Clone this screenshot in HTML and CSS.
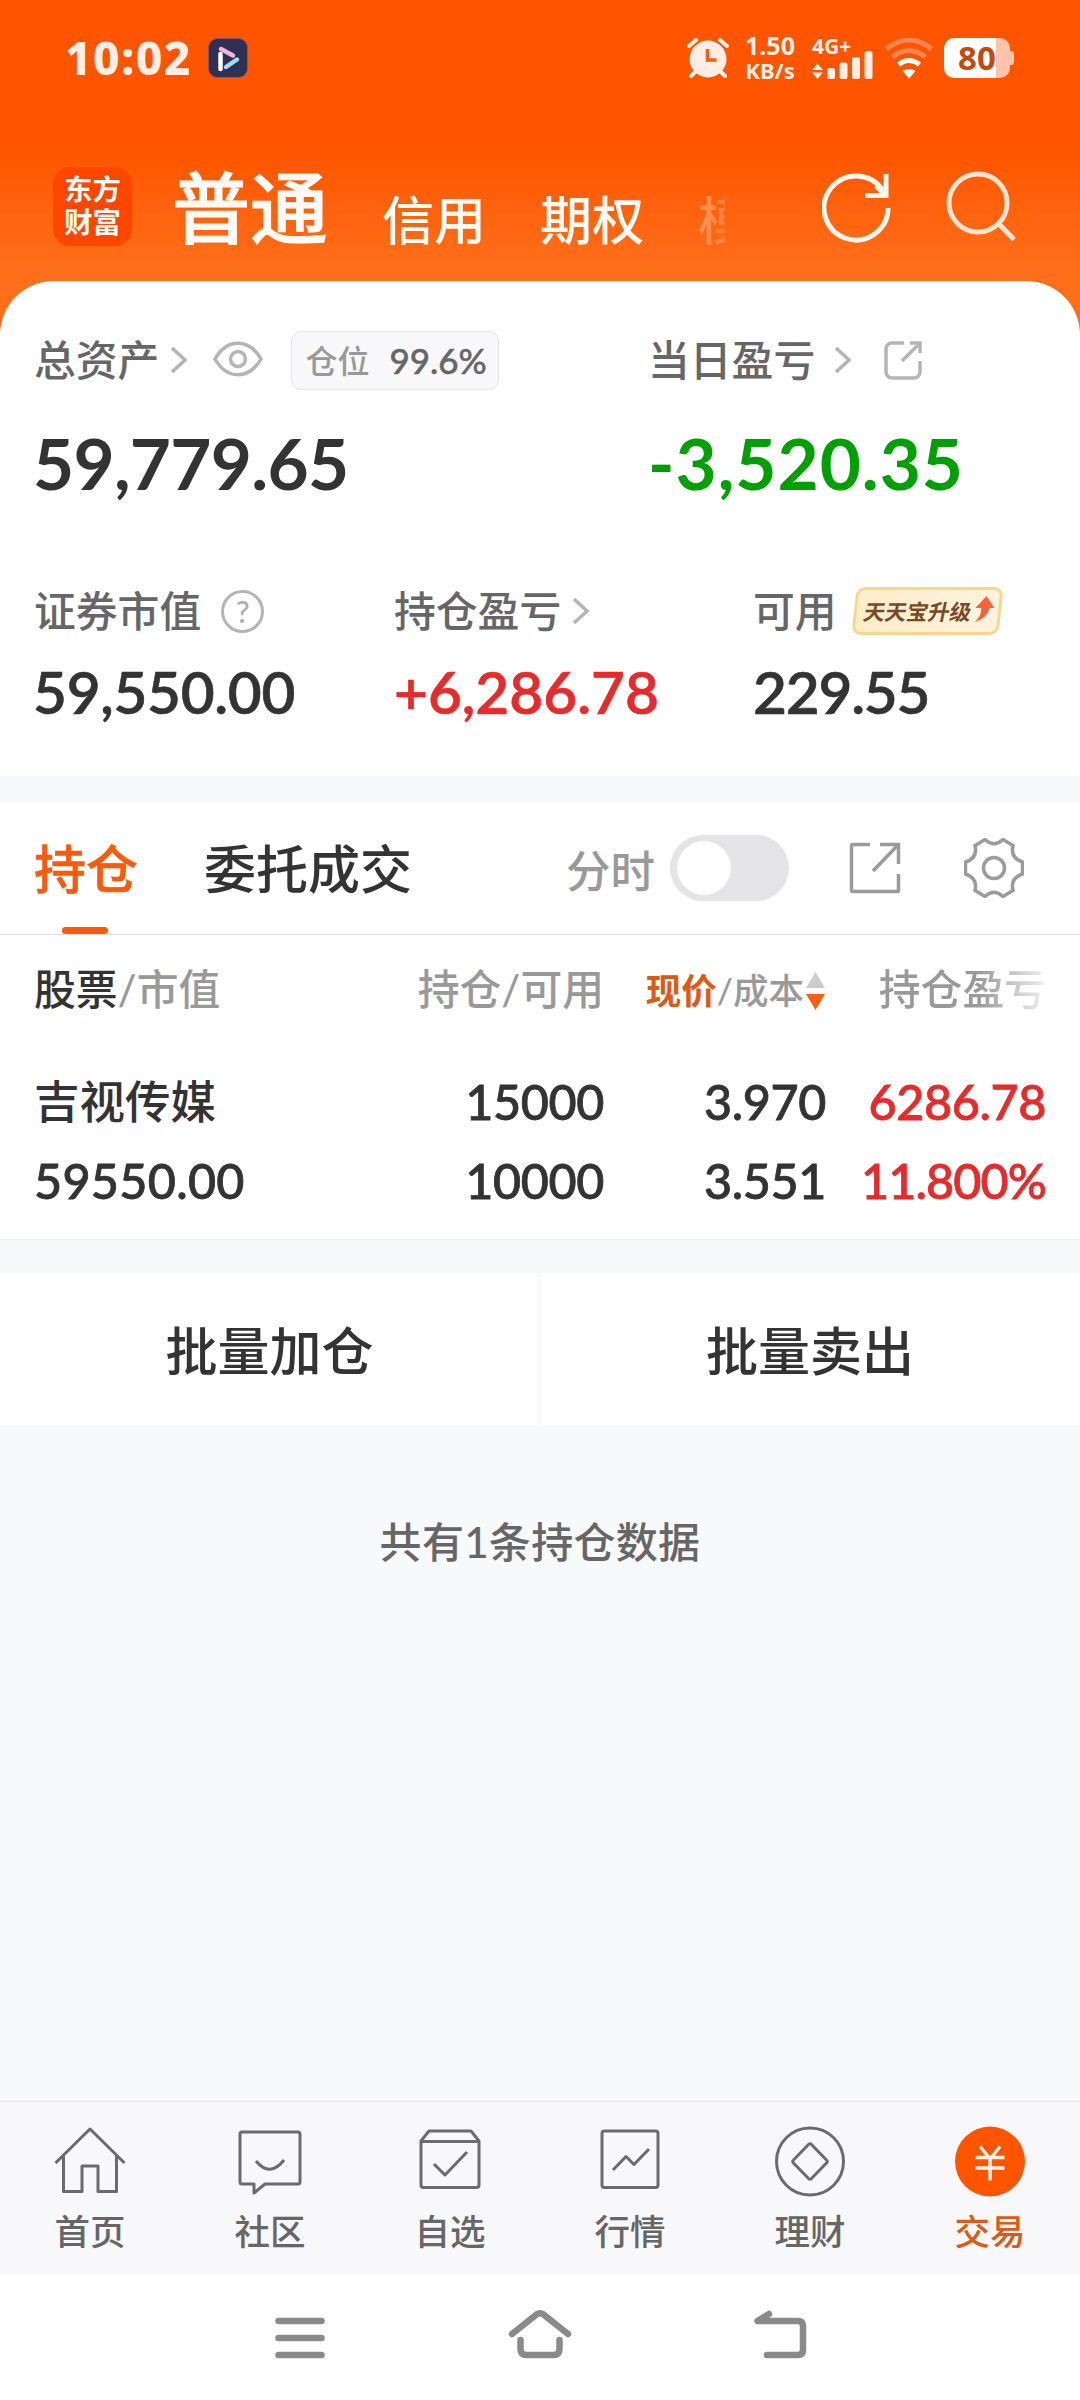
FILE: index.html
```html
<!DOCTYPE html>
<html lang="zh-CN">

<head>
    <title>交易</title>
    <meta charset="utf-8">
    <meta name="viewport" content="width=device-width, initial-scale=1.0">
    <link rel="stylesheet" href="styles.css">
</head>

<body>
    <header>
        <div class="status">
            <span class="clock">10:02</span>
            <svg class="app-dot" width="40" height="40" viewBox="0 0 40 40">
                <rect x=".5" y=".5" width="39" height="39" rx="9" fill="#2f3054" stroke="#8a5566" />
                <path d="M12.5 16v15" stroke="#fff" stroke-width="4.5" stroke-linecap="round" />
                <path d="M13 11l12 6.500" stroke="#f5b5da" stroke-width="4.500" stroke-linecap="round" />
                <path d="M18 29l11-7.500" stroke="#9fdcf8" stroke-width="4.500" stroke-linecap="round" />
            </svg>
            <svg class="alarm" width="42" height="42" viewBox="0 0 42 42">
                <path d="M2 9l7-6M40 9l-7-6M4 39l6-6M38 39l-6-6" stroke="#ffeee6" stroke-width="4" stroke-linecap="round" />
                <circle cx="21" cy="22" r="18.500" fill="#ffeee6" />
                <path d="M20.500 12v11h9" fill="none" stroke="#f75a12" stroke-width="3.500" />
            </svg>
            <div class="speed"><span>1.50</span><span>KB/s</span></div>
            <div class="mobile">
                <span>4G+</span>
                <svg class="bars" width="61" height="28" viewBox="0 0 61 28">
                    <path d="M0 19l5.500-6.500 5.500 6.500zM0 21.500h11L5.500 28z" />
                    <rect x="15" y="17" width="8" height="11" rx="2.500" />
                    <rect x="27.500" y="11.500" width="8" height="16.500" rx="2.500" />
                    <rect x="40" y="6" width="8" height="22" rx="2.500" />
                    <rect x="52.500" y="0" width="8" height="28" rx="2.500" />
                </svg>
            </div>
            <svg class="wifi" width="48" height="41" viewBox="0 0 48 41" stroke-width="5">
                <path d="M1.500 11Q24-7 46.500 11" stroke="#ff8650" />
                <path d="M7.500 19Q24 6 40.500 19" stroke="#ff8650" />
                <path d="M13.500 26.500Q24 18.500 34.500 26.500" stroke="#fff" />
                <path d="M17.500 33q6.500-4 13 0L24 40.500z" fill="#fff" stroke="none" />
            </svg>
            <div class="battery"><span>80</span></div>
        </div>

        <div class="top">
            <div class="logo">东方<br>财富</div>
            <div class="accounts">
                <span class="valgt">普通</span>
                <span>信用</span>
                <span>期权</span>
                <span class="fade">模</span>
            </div>
            <svg class="refresh" width="70" height="72" viewBox="0 0 70 72" stroke="#fff6ee" stroke-width="5">
                <path d="M66 37a32 32 0 1 1-5.500-18" />
                <path d="M64 3v21.500H43" />
                <path d="M54 15l9 9" />
            </svg>
            <svg class="search" width="70" height="72" viewBox="0 0 70 72" stroke="#ffe3d0" stroke-width="5">
                <circle cx="32" cy="32" r="29" />
                <path d="M53 53l15 15.500" />
            </svg>
        </div>
    </header>

    <section class="assets">
        <div class="row total">
            <article>
                <p class="label">
                    <span>总资产</span>
                    <svg class="chev" width="18" height="28" viewBox="0 0 18 28"><path d="M2 2l13 12L2 26" /></svg>
                    <svg class="eye" width="50" height="36" viewBox="0 0 50 36">
                        <path d="M2 18C14-3 36-3 48 18C36 39 14 39 2 18z" />
                        <circle cx="25" cy="18" r="7.500" />
                    </svg>
                    <span class="position">仓位 <b>99.6%</b></span>
                </p>
                <p class="big sum">59,779.65</p>
            </article>
            <article>
                <p class="label">
                    <span>当日盈亏</span>
                    <svg class="chev gap" width="18" height="28" viewBox="0 0 18 28"><path d="M2 2l13 12L2 26" /></svg>
                    <svg class="share" width="38" height="39" viewBox="0 0 38 39">
                        <path d="M20 2H8a6 6 0 0 0-6 6v23a6 6 0 0 0 6 6h22a6 6 0 0 0 6-6V20M26 2h10v10M36 2L18 20" />
                    </svg>
                </p>
                <p class="big down">-3,520.35</p>
            </article>
        </div>
        <div class="row">
            <article>
                <p class="label">
                    <span>证券市值</span>
                    <span class="help">?</span>
                </p>
                <p class="mid">59,550.00</p>
            </article>
            <article>
                <p class="label">
                    <span>持仓盈亏</span>
                    <svg class="chev near" width="18" height="28" viewBox="0 0 18 28"><path d="M2 2l13 12L2 26" /></svg>
                </p>
                <p class="mid up">+6,286.78</p>
            </article>
            <article>
                <p class="label">
                    <span>可用</span>
                    <span class="badge"><i>天天宝升级</i>
                        <svg width="20" height="26" viewBox="0 0 20 26"><path d="M11 0l9 12h-5q-1 10-13 14q6-6 5-14H1z" fill="#f9603c" /></svg>
                    </span>
                </p>
                <p class="mid cash">229.55</p>
            </article>
        </div>
    </section>

    <section class="holdings">
        <div class="tabs">
            <span class="tab valgt">持仓</span>
            <span class="tab">委托成交</span>
            <span class="minute">分时</span>
            <span class="switch"></span>
            <svg class="export" width="52" height="52" viewBox="0 0 52 52">
                <path d="M21 2.500H4a1.500 1.500 0 0 0-1.500 1.500v44a1.500 1.500 0 0 0 1.500 1.500h44a1.500 1.500 0 0 0 1.500-1.500V32M31 2.500h18.500V22M49 3L24 29" />
            </svg>
            <svg class="gear" width="60" height="60" viewBox="0 0 60 60">
                <path d="M21 1.500Q30 10 39 1.500L49 7.500Q46 20 58.500 24V36Q46 40 49 52.500L39 58.500Q30 50 21 58.500L11 52.500Q14 40 1.500 36V24Q14 20 11 7.500z" />
                <circle cx="30" cy="30" r="10.500" />
            </svg>
        </div>

        <div class="grid head">
            <p><em>股票</em>/市值</p>
            <p>持仓/可用</p>
            <p class="sorted">
                <strong>现价</strong>/成本
                <svg width="19" height="38" viewBox="0 0 19 38"><path d="M0 16L9.500 0 19 16z" fill="#ccc" /><path d="M0 22h19L9.500 38z" fill="#f9600f" /></svg>
            </p>
            <p class="fading">持仓盈亏</p>
        </div>
        <div class="grid stock">
            <p class="name">吉视传媒</p>
            <p>15000</p>
            <p>3.970</p>
            <p class="up">6286.78</p>
            <p class="value">59550.00</p>
            <p>10000</p>
            <p>3.551</p>
            <p class="up rate">11.800%</p>
        </div>
    </section>

    <section class="actions">
        <button>批量加仓</button>
        <button>批量卖出</button>
    </section>

    <p class="count">共有1条持仓数据</p>

    <nav>
        <a>
            <svg width="72" height="72" viewBox="0 0 72 72">
                <path d="M1.500 37L36 3l34.500 34M9.500 30v35.500H28V40h16v25.500h18.500V30" />
            </svg>
            首页
        </a>
        <a>
            <svg width="72" height="72" viewBox="0 0 72 72">
                <path d="M8 6h56a2 2 0 0 1 2 2v48a2 2 0 0 1-2 2H31l-11 9v-9H8a2 2 0 0 1-2-2V8a2 2 0 0 1 2-2z" />
                <path d="M22 35q14 17 28-1" />
            </svg>
            社区
        </a>
        <a>
            <svg width="72" height="72" viewBox="0 0 72 72">
                <path d="M7 15l8-10h42l8 10v44a2.500 2.500 0 0 1-2.500 2.500h-53A2.500 2.500 0 0 1 7 59zM7 15.500h58M20 38l11 11 22-23" />
            </svg>
            自选
        </a>
        <a>
            <svg width="72" height="72" viewBox="0 0 72 72">
                <rect x="8" y="5" width="56" height="56.500" rx="2.500" />
                <path d="M19 44l13-13.500 8 8L55 23" />
            </svg>
            行情
        </a>
        <a>
            <svg width="72" height="72" viewBox="0 0 72 72">
                <circle cx="36" cy="35.500" r="33.500" />
                <path d="M34.500 18.500q1.500-1.500 3 0l15 15.500q1.500 1.500 0 3l-15 15.500q-1.500 1.500-3 0l-15-15.500q-1.500-1.500 0-3z" />
            </svg>
            理财
        </a>
        <a class="valgt">
            <svg width="72" height="72" viewBox="0 0 72 72">
                <circle class="coin" cx="36" cy="35.500" r="35" />
                <path class="yen" d="M26 20.500L36 33l10-12.500M21.500 31.500h29M21.500 42h29M36 32v22.500" />
            </svg>
            交易
        </a>
    </nav>

    <footer>
        <svg width="60" height="56" viewBox="0 0 60 56"><path d="M8.500 14h43M8.500 31h43M8.500 48h43" /></svg>
        <svg width="66" height="56" viewBox="0 0 66 56"><path d="M5 27L29.500 7.500q3.500-2.500 7 0L61 27M13.500 33v9q0 6 6 6h27q6 0 6-6v-9" /></svg>
        <svg width="60" height="56" viewBox="0 0 60 56"><path d="M19 7L7.500 14H48q5 0 5 5v24q0 5-5 5H17" /></svg>
    </footer>
</body>

</html>
```
FILE: styles.css
```css
* {
    box-sizing: border-box;
}

body {
    margin: 0;
    width: 1080px;
    height: 2400px;
    display: flex;
    flex-direction: column;
    background-color: #f7f9fb;
    color: #333;
    font-family: Lato, "Noto Sans CJK SC", sans-serif;
    font-weight: 500;
    overflow: hidden;
}

p {
    margin: 0;
}

svg {
    flex: none;
    fill: none;
}

/* header */

header {
    height: 335px;
    margin-bottom: -54px;
    background: linear-gradient(#ff5500 150px, #ff6f1a 270px);
    color: #fffaf5;
}

.status {
    display: flex;
    align-items: center;
    height: 116px;
    padding-left: 65px;
    color: #ffeee6;
    font-family: "Noto Sans", sans-serif;
    font-weight: 700;
}

.clock {
    width: 143px;
    font-size: 46px;
    font-weight: 800;
    letter-spacing: 1.5px;
    line-height: 60px;
    padding-bottom: 2px;
    white-space: nowrap;
}

.alarm {
    margin-left: 439px;
}

.speed {
    width: 56px;
    margin-left: 13px;
    text-align: center;
    line-height: 25px;
    font-size: 22px;
}

.speed span {
    display: block;
}

.speed span:first-child {
    font-size: 25px;
}

.mobile {
    width: 61px;
    height: 41px;
    margin-left: 14px;
    display: flex;
    flex-direction: column;
    justify-content: space-between;
}

.mobile span {
    height: 13px;
    font-size: 21px;
    line-height: 17px;
    white-space: nowrap;
}

.bars {
    fill: #ffeee6;
}

.wifi {
    margin-left: 12px;
}

.battery {
    position: relative;
    width: 66px;
    height: 40px;
    margin-left: 11px;
    border-radius: 10px;
    background: linear-gradient(90deg, #fff 52px, #ffc4ab 52px);
    color: #c24a12;
    font-size: 33px;
    line-height: 39px;
    text-align: center;
}

.battery::after {
    content: "";
    position: absolute;
    left: 66px;
    top: 13px;
    width: 4px;
    height: 14px;
    border-radius: 0 3px 3px 0;
    background-color: #ffc4ab;
}

.top {
    display: flex;
    align-items: center;
    height: 181px;
    padding-left: 53px;
}

.logo {
    width: 79px;
    height: 79px;
    border-radius: 17px;
    background-color: #ff4600;
    font-size: 28.5px;
    font-weight: 700;
    line-height: 33px;
    padding-top: 6px;
    text-align: center;
}

.accounts {
    display: flex;
    align-items: baseline;
    width: 553px;
    height: 110px;
    margin-left: 40px;
    overflow: hidden;
    font-size: 52px;
    line-height: 112px;
    white-space: nowrap;
}

.accounts span {
    margin-right: 54px;
    position: relative;
    top: 2px;
}

.accounts .valgt {
    top: 0;
    font-size: 78px;
    font-weight: 500;
    -webkit-text-stroke: 1px;
}

.accounts .fade {
    width: 27px;
    margin: 0;
    overflow: hidden;
    background: linear-gradient(90deg, #ff9a5c, #ff7e38);
    background-clip: text;
    -webkit-background-clip: text;
    color: transparent;
}

.refresh {
    margin-left: 97px;
}

.search {
    margin-left: 54px;
}

/* assets */

.assets {
    height: 495px;
    padding: 46px 34px 0;
    border-radius: 54px 54px 0 0;
    background-color: #fff;
}

.row {
    display: grid;
    grid-template-columns: 360px 359px 1fr;
}

.row.total {
    grid-template-columns: 614px 1fr;
    height: 251px;
}

.label {
    display: flex;
    align-items: center;
    height: 66px;
    color: #666;
    font-size: 41.8px;
    white-space: nowrap;
}

.label > span:first-child {
    padding-bottom: 4px;
}

.chev,
.eye,
.share {
    stroke: #b5b5b5;
    stroke-width: 3.5;
}

.chev {
    margin-left: 11px;
}

.chev.gap {
    margin-left: 19px;
}

.chev.near {
    margin-left: 11px;
}

.eye {
    margin: -3px 0 0 25px;
}

.share {
    margin-left: 32px;
}

.position {
    width: 208px;
    height: 59px;
    margin-left: 28px;
    padding-left: 13px;
    border: 1px solid #e3e3e6;
    border-radius: 10px;
    background-color: #f8f8fa;
    color: #999;
    font-size: 32px;
    line-height: 57px;
    display: flex;
}

.position b {
    margin-left: 20px;
    color: #666;
    font-size: 35px;
    font-weight: 500;
    -webkit-text-stroke: .5px;
}

.big {
    margin-top: 28px;
    font-size: 71px;
    font-weight: 700;
    letter-spacing: 1px;
    line-height: 84px;
}

.big.sum {
    margin-left: -1px;
    letter-spacing: -.7px;
}

.mid {
    margin: 12px 0 0 -1px;
    font-size: 58.5px;
    font-weight: 600;
    line-height: 70px;
    letter-spacing: -.3px;
    -webkit-text-stroke: .6px;
}

.mid.up {
    margin-left: 0;
    letter-spacing: 0;
}

.mid.cash {
    margin-left: 0;
    letter-spacing: -1.2px;
}

.down {
    color: #00a000;
}

.up {
    color: #e82a2a;
}

.help {
    width: 43px;
    height: 43px;
    margin-left: 20px;
    border: 3px solid #b5b5b5;
    border-radius: 50%;
    color: #b0b0b0;
    font-size: 31px;
    line-height: 37px;
    text-align: center;
}

.badge {
    display: flex;
    align-items: center;
    width: 147px;
    height: 48px;
    margin-left: 17px;
    padding-left: 7px;
    border: 3px solid #f5d78f;
    border-radius: 9px;
    background: linear-gradient(90deg, #ffedca, #fff3dd);
    transform: skewX(-6deg);
    color: #7a4a28;
    font-size: 21.5px;
    font-weight: 700;
}

.badge i {
    padding-bottom: 2px;
    font-style: normal;
    transform: skewX(-6deg);
}

.badge svg {
    margin: -4px 0 0 2px;
}

/* holdings */

.holdings {
    margin-top: 26px;
    border-bottom: 1px solid #ececee;
    background-color: #fff;
    height: 438px;
}

.tabs {
    display: flex;
    align-items: center;
    height: 133px;
    padding-left: 34px;
    border-bottom: 1px solid #ddd;
    font-size: 52px;
}

.tab {
    position: relative;
    margin-right: 66px;
    padding-top: 2px;
    line-height: 130px;
}

.tab.valgt {
    color: #fa5a0a;
    -webkit-text-stroke: .5px;
}

.tab.valgt::after {
    content: "";
    position: absolute;
    left: 28px;
    bottom: 0;
    width: 46px;
    height: 7px;
    border-radius: 4px;
    background-color: #fa5a0a;
}

.minute {
    margin-left: 88px;
    color: #999;
    font-size: 44.5px;
}

.switch {
    width: 119px;
    height: 66px;
    margin-left: 15px;
    padding: 6px 7px;
    border-radius: 33px;
    background-color: #e4e4e6;
}

.switch::after {
    content: "";
    display: block;
    width: 54px;
    height: 54px;
    border-radius: 50%;
    background-color: #fff;
}

.export,
.gear {
    stroke: #9b9b9b;
    stroke-width: 3.5;
}

.export {
    margin-left: 60px;
}

.gear {
    margin-left: 63px;
}

.grid {
    display: grid;
    grid-template-columns: 302px 268px 222px 220px;
    padding: 0 34px 0 34px;
    text-align: right;
}

.grid p:nth-child(4n + 1) {
    text-align: left;
}

.head {
    height: 108px;
    color: #999;
    font-size: 41.8px;
    line-height: 108px;
    white-space: nowrap;
}

.head em {
    color: #333;
    font-style: normal;
}

.head strong {
    color: #dd5a14;
    font-weight: 700;
}

.sorted {
    display: flex;
    align-items: center;
    justify-content: flex-end;
    height: 112px;
    padding-right: 1px;
    font-size: 35.5px;
}

.sorted svg {
    margin: 0 0 0 2px;
}

.head .fading {
    margin-left: 52px;
    background: linear-gradient(90deg, #999 100px, #fff 180px);
    background-clip: text;
    -webkit-background-clip: text;
    color: transparent;
}

.stock {
    padding-top: 19px;
    font-size: 48.5px;
    line-height: 79px;
    font-weight: 500;
    letter-spacing: -.4px;
    -webkit-text-stroke: .8px;
}

.stock .name {
    font-size: 45.5px;
    letter-spacing: 0;
    -webkit-text-stroke: 0;
}

.stock .value {
    letter-spacing: .3px;
}

.stock .rate {
    letter-spacing: -.9px;
}

/* buttons */

.actions {
    display: flex;
    margin-top: 33px;
}

.actions button {
    width: 540px;
    height: 152px;
    padding: 0 0 2px;
    border: none;
    background-color: #fff;
    color: #333;
    font-family: inherit;
    font-size: 52px;
    font-weight: 500;
}

.actions button:first-child {
    border-right: 1px solid #f6f6f6;
}

.count {
    margin-top: 87px;
    color: #666;
    font-size: 42px;
    letter-spacing: .3px;
    line-height: 60px;
    text-align: center;
}

/* bottom navigation */

nav {
    display: flex;
    height: 173px;
    margin-top: auto;
    border-top: 1px solid #e2e3e6;
    background-color: #f8f8fa;
}

nav a {
    display: flex;
    flex-direction: column;
    align-items: center;
    width: 180px;
    padding-top: 24px;
    color: #666;
    font-size: 35.5px;
    line-height: 67px;
}

nav svg {
    stroke: #6b6b6b;
    stroke-width: 3;
    stroke-linejoin: round;
}

nav .valgt {
    color: #dd5a14;
}

.coin {
    fill: #ff5500;
    stroke: none;
}

.yen {
    stroke: #fff0e8;
    stroke-width: 3.5;
}

footer {
    display: flex;
    align-items: center;
    justify-content: center;
    gap: 177px;
    height: 126px;
    padding-bottom: 4px;
    background-color: #fff;
}

footer svg {
    stroke: #8a8a8a;
    stroke-width: 6.5;
    stroke-linecap: round;
    stroke-linejoin: round;
}
```
